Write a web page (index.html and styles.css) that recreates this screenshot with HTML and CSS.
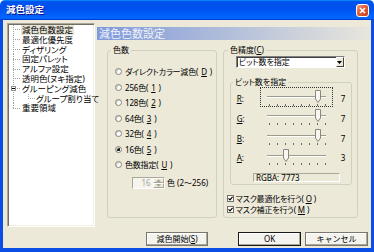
FILE: index.html
```html
<!DOCTYPE html>
<html lang="ja">
<head>
    <meta charset="UTF-8">
    <title>減色設定</title>
    <link rel="stylesheet" href="styles.css">
</head>
<body>
    <div class="window">
        <div class="titlebar">
            <span class="title">減色設定</span>
            <span class="close">
                <svg width="7" height="7" viewBox="0 0 7 7"><path d="M1 1 L6 6 M6 1 L1 6" stroke="#fff" stroke-width="1.6"/></svg>
            </span>
        </div>

        <div class="frame">
            <div class="main">
                <ul class="tree">
                    <li class="item"><span class="branch"></span><span class="label selected">減色色数設定</span></li>
                    <li class="item"><span class="branch"></span><span class="label">最適化優先度</span></li>
                    <li class="item"><span class="branch"></span><span class="label">ディザリング</span></li>
                    <li class="item"><span class="branch"></span><span class="label">固定パレット</span></li>
                    <li class="item"><span class="branch"></span><span class="label">アルファ設定</span></li>
                    <li class="item"><span class="branch"></span><span class="label">透明色(ヌキ指定)</span></li>
                    <li class="item"><span class="branch"><span class="expander"><span class="minus"></span></span></span><span class="label">グルーピング減色</span></li>
                    <li class="item"><span class="pipe"></span><span class="branch child last"></span><span class="label">グループ割り当て</span></li>
                    <li class="item"><span class="branch last"></span><span class="label">重要領域</span></li>
                </ul>

                <div class="pane">
                    <div class="pane-title">減色色数設定</div>

                    <div class="groups">
                        <fieldset class="group count-group">
                            <legend>色数</legend>
                            <div class="radios">
                                <div class="radio-row"><span class="radio"></span>ダイレクトカラー減色(<u>D</u>)</div>
                                <div class="radio-row"><span class="radio"></span>256色(<u>1</u>)</div>
                                <div class="radio-row"><span class="radio"></span>128色(<u>2</u>)</div>
                                <div class="radio-row"><span class="radio"></span>64色(<u>3</u>)</div>
                                <div class="radio-row"><span class="radio"></span>32色(<u>4</u>)</div>
                                <div class="radio-row"><span class="radio checked"></span>16色(<u>5</u>)</div>
                                <div class="radio-row"><span class="radio"></span>色数指定(<u>U</u>)</div>
                                <div class="spin-row">
                                    <div class="spin">
                                        <span class="spin-value">16</span>
                                        <span class="spin-buttons">
                                            <span class="spin-btn"><svg width="5" height="3" viewBox="0 0 5 3"><path d="M0 3 L2.5 0 L5 3 Z" fill="#aca899"/></svg></span>
                                            <span class="spin-btn"><svg width="5" height="3" viewBox="0 0 5 3"><path d="M0 0 L2.5 3 L5 0 Z" fill="#aca899"/></svg></span>
                                        </span>
                                    </div>
                                    <span class="spin-unit">色 (2～256)</span>
                                </div>
                            </div>
                        </fieldset>

                        <fieldset class="group precision-group">
                            <legend>色精度(<u>C</u>)</legend>
                            <div class="combo">
                                <span class="combo-text">ビット数を指定</span>
                                <span class="combo-btn"><svg width="5" height="3" viewBox="0 0 5 3"><path d="M0 0 L2.5 3 L5 0 Z" fill="#000"/></svg></span>
                            </div>

                            <fieldset class="group bits-group">
                                <legend>ビット数を指定</legend>
                                <div class="sliders">
                                    <div class="slider-row">
                                        <span class="axis"><u>R</u>:</span>
                                        <div class="slider focus">
                                            <div class="track"></div>
                                            <div class="ticks"><i></i><i></i><i></i><i></i><i></i><i></i><i></i><i></i></div>
                                            <svg class="thumb" style="left: 54px" width="6" height="13" viewBox="0 0 6 13"><path d="M0.5 0.5 H5.5 V9 L3 12.5 L0.5 9 Z" fill="#f7f6f1" stroke="#8a887c"/></svg>
                                        </div>
                                        <span class="value">7</span>
                                    </div>
                                    <div class="slider-row">
                                        <span class="axis"><u>G</u>:</span>
                                        <div class="slider">
                                            <div class="track"></div>
                                            <div class="ticks"><i></i><i></i><i></i><i></i><i></i><i></i><i></i><i></i></div>
                                            <svg class="thumb" style="left: 54px" width="6" height="13" viewBox="0 0 6 13"><path d="M0.5 0.5 H5.5 V9 L3 12.5 L0.5 9 Z" fill="#f7f6f1" stroke="#8a887c"/></svg>
                                        </div>
                                        <span class="value">7</span>
                                    </div>
                                    <div class="slider-row">
                                        <span class="axis"><u>B</u>:</span>
                                        <div class="slider">
                                            <div class="track"></div>
                                            <div class="ticks"><i></i><i></i><i></i><i></i><i></i><i></i><i></i><i></i></div>
                                            <svg class="thumb" style="left: 54px" width="6" height="13" viewBox="0 0 6 13"><path d="M0.5 0.5 H5.5 V9 L3 12.5 L0.5 9 Z" fill="#f7f6f1" stroke="#8a887c"/></svg>
                                        </div>
                                        <span class="value">7</span>
                                    </div>
                                    <div class="slider-row">
                                        <span class="axis"><u>A</u>:</span>
                                        <div class="slider">
                                            <div class="track"></div>
                                            <div class="ticks"><i></i><i></i><i></i><i></i><i></i><i></i><i></i><i></i></div>
                                            <svg class="thumb" style="left: 22px" width="6" height="13" viewBox="0 0 6 13"><path d="M0.5 0.5 H5.5 V9 L3 12.5 L0.5 9 Z" fill="#f7f6f1" stroke="#8a887c"/></svg>
                                        </div>
                                        <span class="value">3</span>
                                    </div>
                                </div>
                                <div class="rgba">RGBA: 7773</div>
                            </fieldset>

                            <div class="checks">
                                <div class="check-row"><span class="checkbox"><svg width="5" height="5" viewBox="0 0 5 5"><path d="M0.5 2.3 L2 3.8 L4.6 0.8" fill="none" stroke="#000" stroke-width="1.2"/></svg></span>マスク最適化を行う(<u>O</u>)</div>
                                <div class="check-row"><span class="checkbox"><svg width="5" height="5" viewBox="0 0 5 5"><path d="M0.5 2.3 L2 3.8 L4.6 0.8" fill="none" stroke="#000" stroke-width="1.2"/></svg></span>マスク補正を行う(<u>M</u>)</div>
                            </div>
                        </fieldset>
                    </div>
                </div>
            </div>

            <div class="buttons">
                <button class="btn start-btn">減色開始(<u>S</u>)</button>
                <button class="btn default">OK</button>
                <button class="btn">キャンセル</button>
            </div>
        </div>
    </div>
</body>
</html>
```

FILE: styles.css
```css
* {
    box-sizing: border-box;
}

body {
    margin: 0;
    background-color: #ffffff;
    font-family: "Noto Sans", "Noto Sans CJK JP", sans-serif;
    font-size: 8px;
    color: #000;
    font-feature-settings: "palt";
}

u {
    text-decoration-thickness: 1px;
    text-underline-offset: 1px;
}

.window {
    width: 374px;
    height: 252px;
    display: flex;
    flex-direction: column;
}

/* title bar */
.titlebar {
    height: 20px;
    flex: none;
    display: flex;
    align-items: center;
    justify-content: space-between;
    padding: 0 5px 0 6px;
    border-radius: 5px 5px 0 0;
    background: linear-gradient(180deg, #0997ff, #0053ee 8%, #0050ee 40%, #0066ff 88%, #0066ff 93%, #005bff 95%, #003dd7 96%, #003dd7);
}

.title {
    color: #fff;
    font-weight: bold;
    font-size: 9.5px;
    line-height: 12px;
    text-shadow: 1px 1px #0f1089;
}

.close {
    width: 13px;
    height: 13px;
    display: flex;
    align-items: center;
    justify-content: center;
    border: 1px solid #fff;
    border-radius: 3px;
    background: linear-gradient(135deg, #f3a58a, #e2603a 40%, #c8401c);
}

/* dialog body */
.frame {
    flex: 1;
    display: flex;
    flex-direction: column;
    gap: 5px;
    padding: 3px 1px 3px 4px;
    background-color: #ece9d8;
    border: 3px solid #0b4ee6;
    border-top: none;
    box-shadow: inset 0 -1px #0b4ee6;
}

.main {
    height: 204px;
    display: flex;
    gap: 2px;
}

/* tree view */
.tree {
    width: 88px;
    height: 204px;
    margin: 0;
    padding: 1px 0 0 5px;
    list-style: none;
    background-color: #fff;
    border: 1px solid;
    border-color: #aca899 #fff #fff #aca899;
    box-shadow: inset 1px 1px #716f64, inset -1px -1px #f1efe2;
    font-size: 8.5px;
}

.item {
    height: 9.8px;
    display: flex;
    align-items: center;
}

.branch {
    width: 8px;
    height: 100%;
    flex: none;
    display: flex;
    align-items: center;
    background:
        repeating-linear-gradient(to bottom, #a0a0a0 0 1px, transparent 1px 2px) left top / 1px 100% no-repeat,
        repeating-linear-gradient(to right, #a0a0a0 0 1px, transparent 1px 2px) left center / 100% 1px no-repeat;
}

.branch.last {
    background-size: 1px 50%, 100% 1px;
}

.branch.child {
    width: 7px;
}

.pipe {
    width: 15px;
    height: 100%;
    flex: none;
    background: repeating-linear-gradient(to bottom, #a0a0a0 0 1px, transparent 1px 2px) left top / 1px 100% no-repeat;
}

.expander {
    width: 5px;
    height: 5px;
    margin-left: -2px;
    display: flex;
    align-items: center;
    justify-content: center;
    background-color: #fff;
    border: 1px solid #8c8c8c;
}

.minus {
    width: 3px;
    height: 1px;
    background-color: #000;
}

.label {
    padding: 0 1px;
    line-height: 9.8px;
    white-space: nowrap;
}

.label.selected {
    background-color: #e6e3d5;
}

/* right pane */
.pane {
    flex: 1;
    padding-top: 4px;
}

.pane-title {
    height: 13px;
    padding-left: 2px;
    font-size: 11px;
    line-height: 13px;
    color: #eef1fb;
    background: linear-gradient(to right, #7f99d9, #e8e6dc);
}

.groups {
    display: flex;
    align-items: flex-start;
    gap: 6px;
    margin-top: 5px;
    padding-left: 10px;
}

.group {
    margin: 0;
    padding: 0;
    min-width: 0;
    border: 1px solid #d0d0bf;
    border-radius: 3px;
}

.group legend {
    margin-left: 3px;
    padding: 0 2px;
    line-height: 10px;
}

.count-group {
    width: 110px;
    height: 173px;
}

.precision-group {
    width: 135px;
    height: 173px;
}

.precision-group > legend {
    margin-left: 4px;
}

/* radios */
.radios {
    padding: 8.75px 0 0 7px;
}

.radio-row {
    height: 15.5px;
    display: flex;
    align-items: center;
    gap: 3px;
    white-space: nowrap;
    letter-spacing: -0.2px;
}

.radio {
    width: 7px;
    height: 7px;
    flex: none;
    border-radius: 50%;
    border: 1px solid #85837a;
    background-color: #fff;
    box-shadow: inset 1px 1px #d0cdc0;
}

.radio.checked {
    background: radial-gradient(circle, #1e1e1e 0 1.4px, #fff 1.9px);
}

.spin-row {
    display: flex;
    align-items: center;
    margin-top: 4.25px;
    padding-left: 16.7px;
}

.spin {
    width: 33px;
    height: 12px;
    display: flex;
    border: 1px solid;
    border-color: #aca899 #fff #fff #aca899;
    background-color: #f5f4ee;
}

.spin-value {
    flex: 1;
    padding-right: 2px;
    text-align: right;
    line-height: 10px;
    color: #aca899;
}

.spin-buttons {
    width: 11px;
    display: flex;
    flex-direction: column;
}

.spin-btn {
    flex: 1;
    display: flex;
    align-items: center;
    justify-content: center;
    background-color: #ece9d8;
    border: 1px solid;
    border-color: #fff #aca899 #aca899 #fff;
}

.spin-unit {
    margin-left: 2.3px;
}

/* colour precision */
.combo {
    width: 109px;
    height: 12px;
    margin: 1px 0 0 11.7px;
    display: flex;
    background-color: #fff;
    border: 1px solid;
    border-color: #808080 #fff #fff #808080;
    box-shadow: inset 1px 1px #404040;
}

.combo-text {
    flex: 1;
    padding-left: 2px;
    line-height: 10px;
}

.combo-btn {
    width: 8px;
    display: flex;
    align-items: center;
    justify-content: center;
    background-color: #ece9d8;
    border: 1px solid;
    border-color: #fff #404040 #404040 #fff;
}

.bits-group {
    width: 122px;
    margin: 9px 0 0 6px;
    padding: 0 0 2px;
}

.bits-group legend {
    margin-left: 2px;
}

.sliders {
    padding: 2.1px 0 0 5.7px;
}

.slider-row {
    height: 19.75px;
    display: flex;
    align-items: flex-start;
}

.axis {
    width: 23.3px;
    line-height: 19.75px;
}

.slider {
    position: relative;
    width: 73px;
    height: 20px;
    margin-top: -2.4px;
    padding: 8px 6px 0;
    border: 1px dotted transparent;
}

.slider.focus {
    border-color: #333;
}

.track {
    height: 2px;
    border-top: 1px solid #9d9b8f;
    border-bottom: 1px solid #fff;
}

.ticks {
    display: flex;
    gap: 7px;
    margin: 6px 0 0 2px;
}

.ticks i {
    width: 1px;
    height: 2px;
    background-color: #6f6d64;
}

.thumb {
    position: absolute;
    top: 2px;
}

.value {
    margin-left: 7.7px;
    line-height: 19.75px;
}

.rgba {
    width: 87px;
    height: 9px;
    margin: 5.4px 0 0 22px;
    padding-left: 2px;
    line-height: 7px;
    border: 1px solid;
    border-color: #aca899 #fff #fff #aca899;
}

/* checkboxes */
.checks {
    margin: 8px 0 0 2.7px;
}

.check-row {
    height: 10.5px;
    display: flex;
    align-items: center;
    gap: 2px;
    white-space: nowrap;
    letter-spacing: -0.2px;
}

.checkbox {
    width: 7px;
    height: 7px;
    flex: none;
    display: flex;
    align-items: center;
    justify-content: center;
    background-color: #fff;
    border: 1px solid #716f64;
}

/* buttons */
.buttons {
    height: 14px;
    display: flex;
    justify-content: flex-end;
    gap: 4px;
    padding-right: 2px;
}

.btn {
    width: 63px;
    height: 14px;
    padding: 0;
    font-family: inherit;
    font-size: 8px;
    line-height: 12px;
    color: #000;
    background-color: #f4f3ee;
    border: 1px solid #7a786e;
    box-shadow: inset -1px -1px #aca899, inset 1px 1px #fff;
}

.btn.default {
    border-color: #1a1a1a;
}

.start-btn {
    width: 62px;
    margin-right: 26px;
}
```
